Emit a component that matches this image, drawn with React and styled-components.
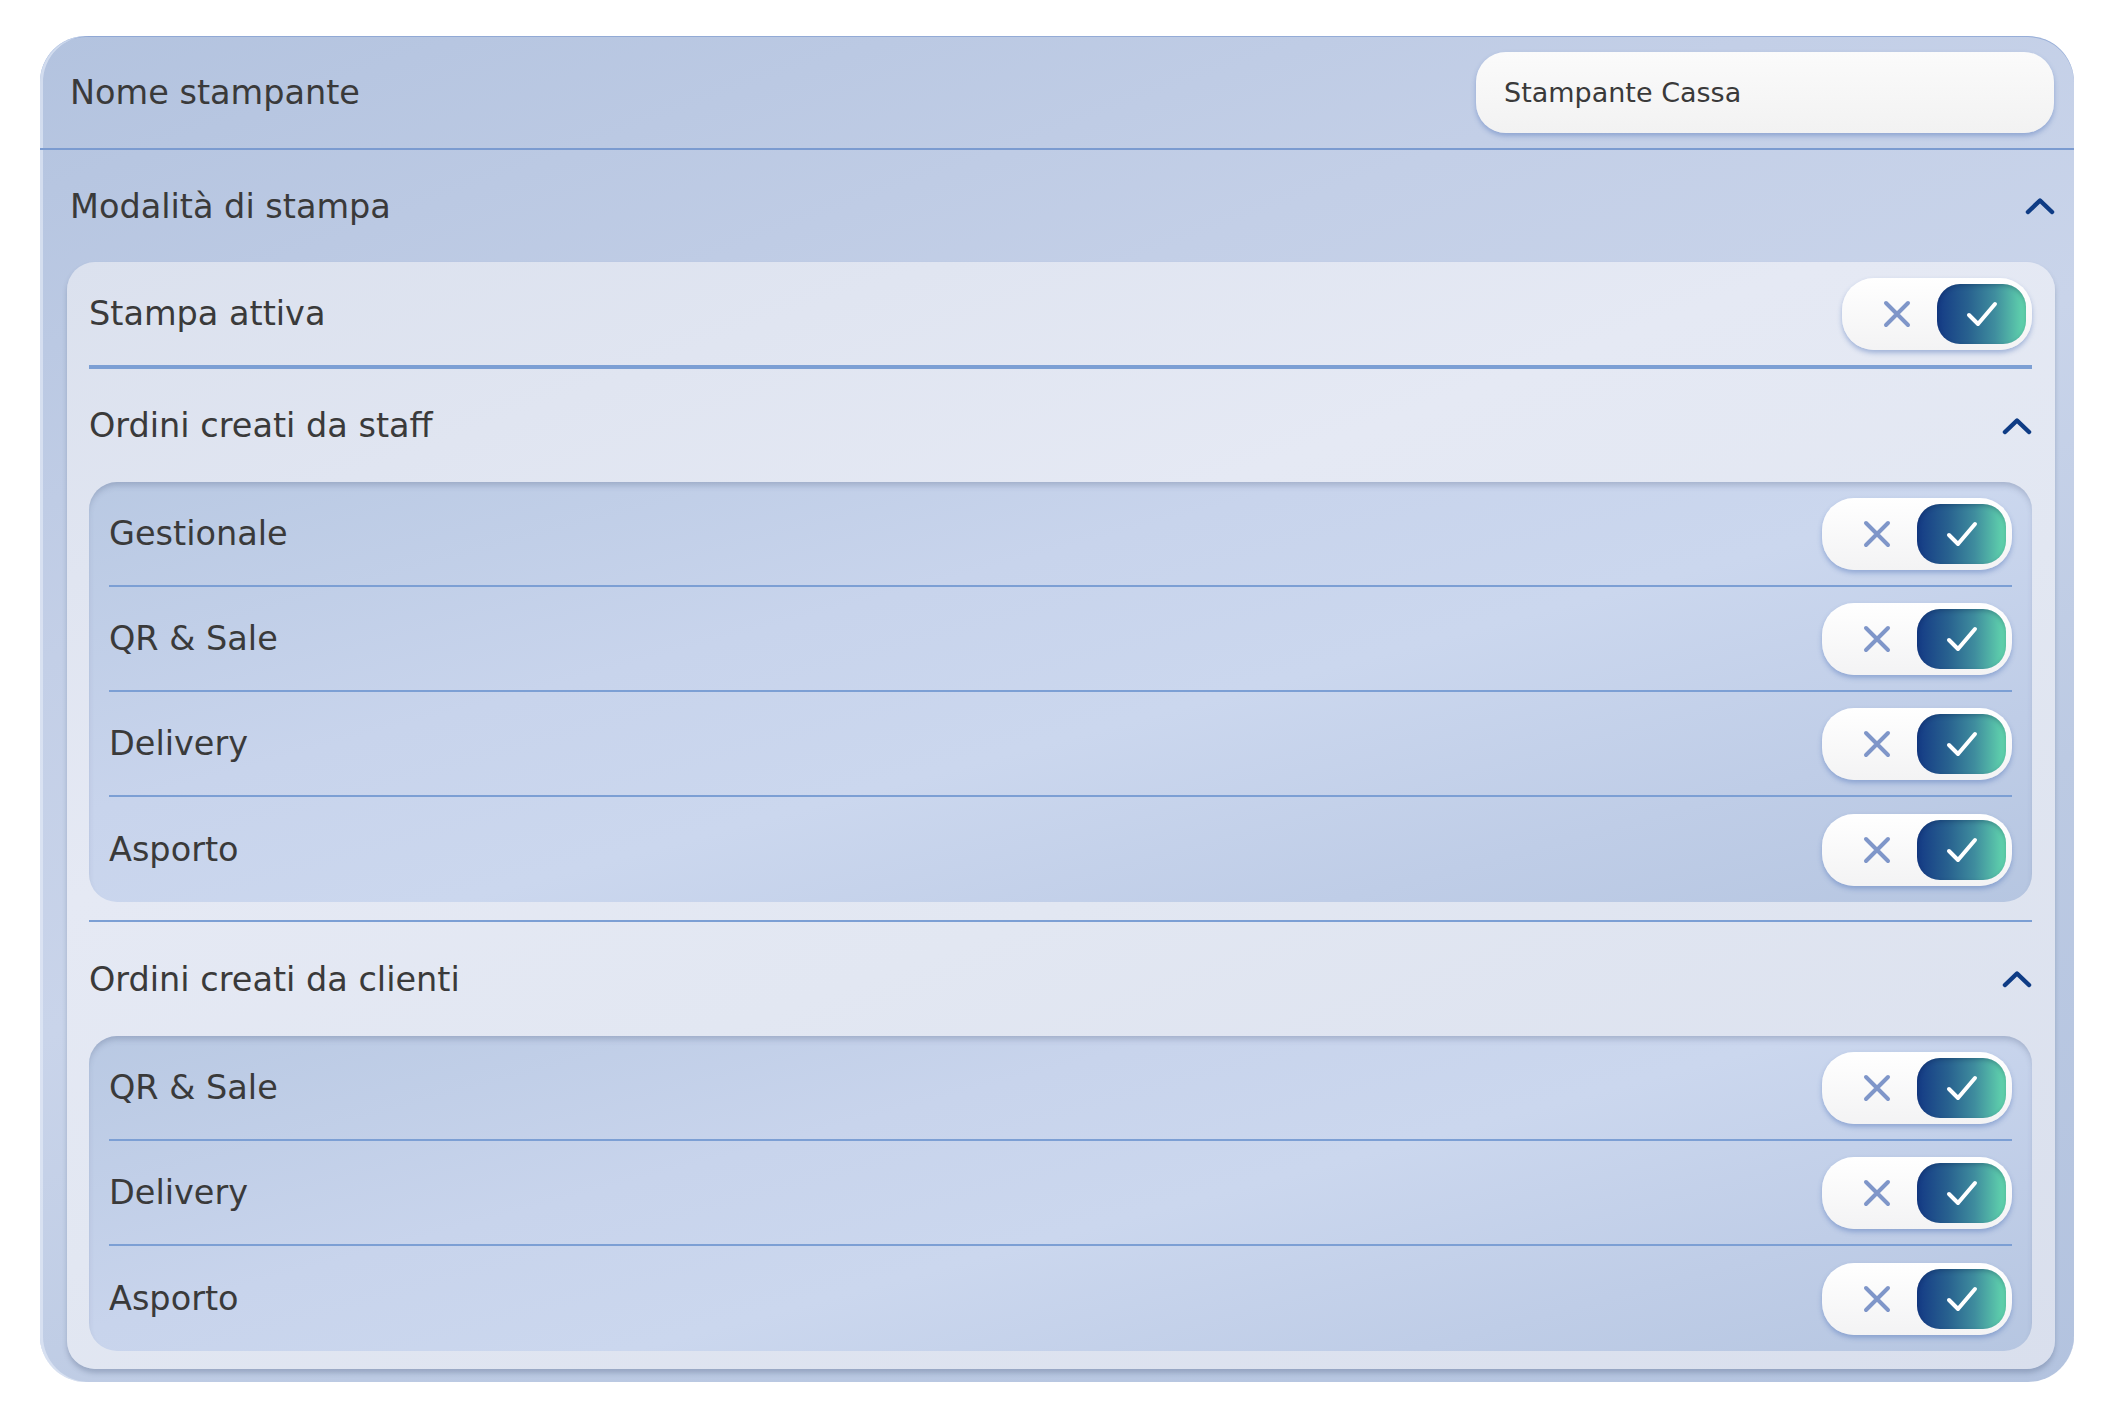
import React from 'react';
import styled, { createGlobalStyle } from 'styled-components';

const GlobalStyle = createGlobalStyle`
  body {
    margin: 0;
    background: #ffffff;
    font-family: "DejaVu Sans", "Liberation Sans", sans-serif;
    color: #3a3a3a;
  }
`;

const Card = styled.div`
  margin: 36px 0 0 40px;
  width: 2034px;
  box-sizing: border-box;
  border-radius: 46px;
  padding-bottom: 13px;
  overflow: hidden;
  background: linear-gradient(160deg, #b3c3df 0%, #c3cfe7 30%, #c9d4ea 48%, #bccae3 70%, #b3c3df 100%);
  box-shadow: inset 3px 0 0 rgba(230, 236, 248, 0.6), inset 0 1px 0 rgba(120, 150, 205, 0.6);
`;

const HeaderRow = styled.div`
  height: 112px;
  display: flex;
  align-items: center;
  justify-content: space-between;
  padding: 0 20px 0 30px;
  border-bottom: 2px solid #7b9bd0;
`;

const Label = styled.span`
  font-size: 33.5px;
  color: #3a3a3a;
`;

const NameInput = styled.div`
  width: 578px;
  height: 81px;
  box-sizing: border-box;
  border-radius: 30px;
  padding-left: 28px;
  display: flex;
  align-items: center;
  background: linear-gradient(180deg, #fbfbfb, #f2f2f2);
  box-shadow: 0 3px 5px rgba(80, 115, 185, 0.45);
  font-size: 27px;
  color: #3a3a3a;
`;

const SectionHead = styled.div`
  height: ${p => p.$h}px;
  display: flex;
  align-items: center;
  justify-content: space-between;
  padding: ${p => p.$pad || '0'};
`;

const LightPanel = styled.div`
  margin: 0 19px 0 27px;
  padding: 0 23px 18px 22px;
  border-radius: 28px;
  background: linear-gradient(160deg, #dbe1ee 0%, #e5e9f4 35%, #e2e7f2 55%, #d9dfed 100%);
  box-shadow: 0 4px 5px rgba(70, 85, 120, 0.3);
`;

const Row = styled.div`
  height: 105px;
  box-sizing: border-box;
  display: flex;
  align-items: center;
  justify-content: space-between;
  border-bottom: ${p => (p.$last ? 'none' : '2px solid #7c9fd4')};
  margin: ${p => (p.$inset ? '0 20px' : '0')};
`;

const Divider = styled.div`
  height: 2px;
  margin-top: ${p => p.$top || 0}px;
  background: #7c9fd4;
`;

const SubPanel = styled.div`
  border-radius: 28px;
  background: linear-gradient(165deg, #b9c9e3 0%, #c8d4ec 35%, #cbd7ee 55%, #bfcde7 80%, #b6c6e1 100%);
  box-shadow: inset 0 5px 6px -2px rgba(60, 75, 110, 0.28);
`;

const ToggleWrap = styled.div`
  width: 190px;
  height: 72px;
  box-sizing: border-box;
  border-radius: 32px;
  padding: 6px;
  display: flex;
  align-items: stretch;
  background: linear-gradient(180deg, #ffffff, #f3f3f4);
  box-shadow: 0 3px 5px rgba(80, 115, 185, 0.45);
`;

const OffSide = styled.div`
  flex: 1;
  display: flex;
  align-items: center;
  justify-content: center;
  padding-left: 8px;
`;

const OnSide = styled.div`
  width: 89px;
  border-radius: 23px;
  display: flex;
  align-items: center;
  justify-content: center;
  background: linear-gradient(90deg, #143a85 0%, #28618f 35%, #3f8d9e 65%, #63d9ae 100%);
  box-shadow: inset 0 2px 4px rgba(0, 20, 60, 0.25);
`;

const Chevron = () => (
  <svg width="30" height="18" viewBox="0 0 30 18">
    <path d="M3 15 L15 3.5 L27 15" fill="none" stroke="#0f3c85" strokeWidth="4.5" strokeLinecap="round" strokeLinejoin="round" />
  </svg>
);

const Toggle = () => (
  <ToggleWrap>
    <OffSide>
      <svg width="28" height="28" viewBox="0 0 28 28">
        <path d="M3 3 L25 25 M25 3 L3 25" stroke="#7f96c9" strokeWidth="4" strokeLinecap="round" />
      </svg>
    </OffSide>
    <OnSide>
      <svg width="32" height="28" viewBox="0 0 32 28">
        <path d="M3 15 L12 24 L29 4" fill="none" stroke="#ffffff" strokeWidth="4" strokeLinecap="round" strokeLinejoin="round" />
      </svg>
    </OnSide>
  </ToggleWrap>
);

const staff = ['Gestionale', 'QR & Sale', 'Delivery', 'Asporto'];
const clienti = ['QR & Sale', 'Delivery', 'Asporto'];

const ChannelList = ({ items }) => (
  <SubPanel>
    {items.map((name, i) => (
      <Row key={name} $inset $last={i === items.length - 1}>
        <Label>{name}</Label>
        <Toggle />
      </Row>
    ))}
  </SubPanel>
);

const App = () => (
  <>
    <GlobalStyle />
    <Card>
      <HeaderRow>
        <Label>Nome stampante</Label>
        <NameInput>Stampante Cassa</NameInput>
      </HeaderRow>
      <SectionHead $h={112} $pad="0 19px 0 30px">
        <Label>Modalità di stampa</Label>
        <Chevron />
      </SectionHead>
      <LightPanel>
        <Row>
          <Label>Stampa attiva</Label>
          <Toggle />
        </Row>
        <Divider />
        <SectionHead $h={113}>
          <Label>Ordini creati da staff</Label>
          <Chevron />
        </SectionHead>
        <ChannelList items={staff} />
        <Divider $top={18} />
        <SectionHead $h={114}>
          <Label>Ordini creati da clienti</Label>
          <Chevron />
        </SectionHead>
        <ChannelList items={clienti} />
      </LightPanel>
    </Card>
  </>
);

export default App;
